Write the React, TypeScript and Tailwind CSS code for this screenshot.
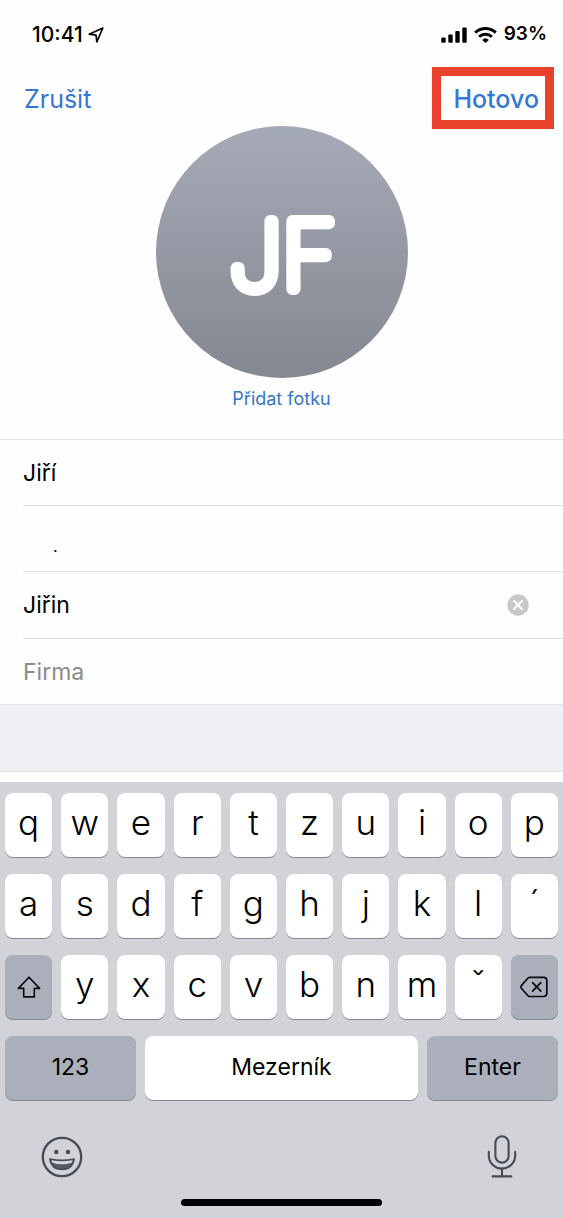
import { useState } from "react";
import type { ReactNode } from "react";

function LocationArrow() {
  return (
    <svg viewBox="0 0 16 16" className="h-4 w-4" fill="none" stroke="black" strokeWidth="1.7" strokeLinejoin="round" aria-hidden="true">
      <path d="M14.8 1 L1.2 7.2 L8 8.1 L8.9 14.8 Z" />
    </svg>
  );
}

function SignalBars() {
  return (
    <svg viewBox="0 0 26 16" className="h-4 w-[26px]" fill="black" aria-hidden="true">
      <rect x="0.3" y="10.4" width="4.4" height="5.3" rx="1" />
      <rect x="7.3" y="7.4" width="4.4" height="8.3" rx="1" />
      <rect x="14.3" y="4" width="4.4" height="11.7" rx="1" />
      <rect x="21.3" y="0.4" width="4.4" height="15.3" rx="1" />
    </svg>
  );
}

function WifiIcon() {
  return (
    <svg viewBox="0 0 23 16" className="h-4 w-[23px]" fill="none" stroke="black" strokeWidth="2.9" aria-hidden="true">
      <path d="M1.2 5.6 A14.8 14.8 0 0 1 21.8 5.6" />
      <path d="M5.1 9.8 A9.2 9.2 0 0 1 17.9 9.8" />
      <path d="M11.5 15.9 L8.2 12.9 A4.8 4.8 0 0 1 14.8 12.9 Z" fill="black" stroke="none" />
    </svg>
  );
}

function ClearIcon() {
  return (
    <svg viewBox="0 0 22 22" className="h-[22px] w-[22px]" aria-hidden="true">
      <circle cx="11" cy="11" r="10.7" fill="#c8c8c9" />
      <path d="M7 7 L15 15 M15 7 L7 15" stroke="white" strokeWidth="2.1" strokeLinecap="round" />
    </svg>
  );
}

function ShiftIcon() {
  return (
    <svg viewBox="0 0 24 22" className="h-[22px] w-6" fill="none" stroke="#0b0b0d" strokeWidth="1.6" strokeLinejoin="round" aria-hidden="true">
      <path d="M12 1.2 L22.6 12.4 H17.3 V20.9 H6.7 V12.4 H1.4 Z" />
    </svg>
  );
}

function DeleteIcon() {
  return (
    <svg viewBox="0 0 28 22" className="h-[22px] w-7" fill="none" stroke="#0b0b0d" strokeWidth="1.7" strokeLinejoin="round" strokeLinecap="round" aria-hidden="true">
      <path d="M9.6 1.3 H23.6 Q26.8 1.3 26.8 4.5 V17.3 Q26.8 20.5 23.6 20.5 H9.6 Q8.7 20.5 8 19.8 L1.4 12.2 Q0.6 10.9 1.4 9.6 L8 2 Q8.7 1.3 9.6 1.3 Z" />
      <path d="M12.6 6.6 L20.8 15.2 M20.8 6.6 L12.6 15.2" />
    </svg>
  );
}

function EmojiIcon() {
  return (
    <svg viewBox="0 0 42 42" className="h-[42px] w-[42px]" aria-hidden="true">
      <circle cx="21" cy="21" r="19.2" fill="none" stroke="#484b50" strokeWidth="2.3" />
      <circle cx="15.3" cy="16" r="2.2" fill="#484b50" />
      <circle cx="27" cy="16" r="2.2" fill="#484b50" />
      <path d="M8.8 23 Q21 25.4 33.2 23 Q31.6 33.6 21 33.6 Q10.4 33.6 8.8 23 Z" fill="#565960" stroke="#484b50" strokeWidth="1.5" strokeLinejoin="round" />
      <path d="M10.4 24.2 Q21 26.2 31.6 24.2 L31 26.4 Q21 30.2 11 26.4 Z" fill="#d6d8dc" />
    </svg>
  );
}

function MicIcon() {
  return (
    <svg viewBox="0 0 30 44" className="h-11 w-[30px]" fill="none" stroke="#484b50" strokeWidth="2.1" strokeLinecap="round" aria-hidden="true">
      <rect x="8.4" y="1.2" width="13.2" height="26.4" rx="6.6" />
      <path d="M1.8 16.8 V20.4 A13.2 13.2 0 0 0 28.2 20.4 V16.8" />
      <path d="M15 33.6 V41.4 M5.6 41.4 H24.4" />
    </svg>
  );
}

function Monogram({ initials }: { initials: string }) {
  return (
    <div className="h-[252px] w-[252px] rounded-full bg-linear-to-b from-[#a5aab7] to-[#848892]">
      <svg viewBox="0 0 252 252" className="h-full w-full" role="img" aria-label={initials}>
        <text
          x="127"
          y="163"
          textAnchor="middle"
          className="fill-white stroke-white font-['Inter',sans-serif] text-[94px] font-thin"
          strokeWidth="12"
          strokeLinejoin="round"
        >
          {initials}
        </text>
      </svg>
    </div>
  );
}

type KeyProps = { children: ReactNode; tone?: "light" | "dark"; label?: string; size?: "letter" | "word" };

function Key({ children, tone = "light", label, size = "letter" }: KeyProps) {
  const color = tone === "light" ? "bg-white" : "bg-[#abafbb]";
  const text = size === "letter" ? "text-[35px] font-light pb-1.5" : "text-[23px] font-normal pb-0.5";
  return (
    <button
      type="button"
      aria-label={label}
      className={`flex h-16 min-w-0 items-center justify-center rounded-lg shadow-[0_1px_0_#85878d] ${color} ${text}`}
    >
      {children}
    </button>
  );
}

const rows = [
  ["q", "w", "e", "r", "t", "z", "u", "i", "o", "p"],
  ["a", "s", "d", "f", "g", "h", "j", "k", "l", "´"],
  ["y", "x", "c", "v", "b", "n", "m", "ˇ"],
];

function Keyboard() {
  return (
    <section aria-label="Klávesnice" className="bg-[#d1d3d9] px-[5px] pt-[11px] pb-3 text-black">
      <div className="flex flex-col gap-[17px]">
        <div className="grid grid-cols-10 gap-x-[9px] gap-y-[17px]">
          {rows[0].map((k) => <Key key={k}>{k}</Key>)}
          {rows[1].map((k) => <Key key={k}>{k}</Key>)}
          <button type="button" aria-label="Shift" className="flex h-16 items-center justify-center rounded-lg bg-[#abafbb] shadow-[0_1px_0_#85878d]">
            <ShiftIcon />
          </button>
          {rows[2].map((k) => <Key key={k}>{k}</Key>)}
          <button type="button" aria-label="Smazat" className="flex h-16 items-center justify-center rounded-lg bg-[#abafbb] shadow-[0_1px_0_#85878d]">
            <DeleteIcon />
          </button>
        </div>
        <div className="grid grid-cols-[12fr_25fr_12fr] gap-[9px]">
          <Key tone="dark" size="word">123</Key>
          <Key size="word">Mezerník</Key>
          <Key tone="dark" size="word">Enter</Key>
        </div>
      </div>
      <div className="flex items-center justify-between pt-[35px] pr-[41px] pl-9">
        <button type="button" aria-label="Emoji"><EmojiIcon /></button>
        <button type="button" aria-label="Diktování"><MicIcon /></button>
      </div>
      <div className="mx-auto mt-5 h-[7px] w-[201px] rounded-full bg-black" />
    </section>
  );
}

const fieldClass =
  "h-full min-w-0 flex-1 bg-transparent text-[23px] text-black outline-none placeholder:text-[#8a8a8d]";

export default function App() {
  const [first, setFirst] = useState("Jiří");
  const [last, setLast] = useState(".");
  const [nick, setNick] = useState("Jiřin");
  const [company, setCompany] = useState("");

  return (
    <main className="flex min-h-screen flex-col bg-[#fefefe] font-['Inter','Liberation_Sans',sans-serif]">
      <div className="flex h-[67px] items-center justify-between pt-0.5 pr-4 pl-8 text-black">
        <div className="flex items-center gap-[5px]">
          <span className="text-[21px] font-medium">10:41</span>
          <LocationArrow />
        </div>
        <div className="flex items-center gap-[7px]">
          <SignalBars />
          <WifiIcon />
          <span className="text-[19px] font-semibold">93%</span>
        </div>
      </div>

      <header className="flex items-center justify-between pr-[9px] pl-6 text-[25px] text-[#3577d4]">
        <button type="button" className="pt-[3px]">Zrušit</button>
        <button type="button" className="h-[62px] border-[9px] border-[#e9412b] pt-[3px] pr-1.5 pl-3 font-medium">Hotovo</button>
      </header>

      <div className="-mt-[3px] flex flex-col items-center">
        <Monogram initials="JF" />
        <button type="button" className="mt-[7px] text-lg text-[#3577c4]">Přidat fotku</button>
      </div>

      <form className="mt-[26px] border-y border-[#e0e0e3] pl-[23px]">
        <div className="flex h-[66px] items-center border-b border-[#e0e0e3]">
          <input aria-label="Jméno" className={fieldClass} value={first} onChange={(e) => setFirst(e.target.value)} />
        </div>
        <div className="flex h-[66px] items-center border-b border-[#e0e0e3]">
          <input
            aria-label="Příjmení"
            className="h-full min-w-0 flex-1 bg-transparent pt-3.5 pl-[30px] text-base text-black outline-none"
            value={last}
            onChange={(e) => setLast(e.target.value)}
          />
        </div>
        <div className="flex h-[67px] items-center border-b border-[#e0e0e3] pr-[34px]">
          <input aria-label="Přezdívka" className={fieldClass} value={nick} onChange={(e) => setNick(e.target.value)} />
          <button type="button" aria-label="Vymazat text" onClick={() => setNick("")}><ClearIcon /></button>
        </div>
        <div className="flex h-[65px] items-center">
          <input aria-label="Firma" placeholder="Firma" className={fieldClass} value={company} onChange={(e) => setCompany(e.target.value)} />
        </div>
      </form>

      <div className="h-[67px] border-b border-[#e0e0e3] bg-[#f0eff5]" />
      <div className="h-2.5" />
      <Keyboard />
    </main>
  );
}
